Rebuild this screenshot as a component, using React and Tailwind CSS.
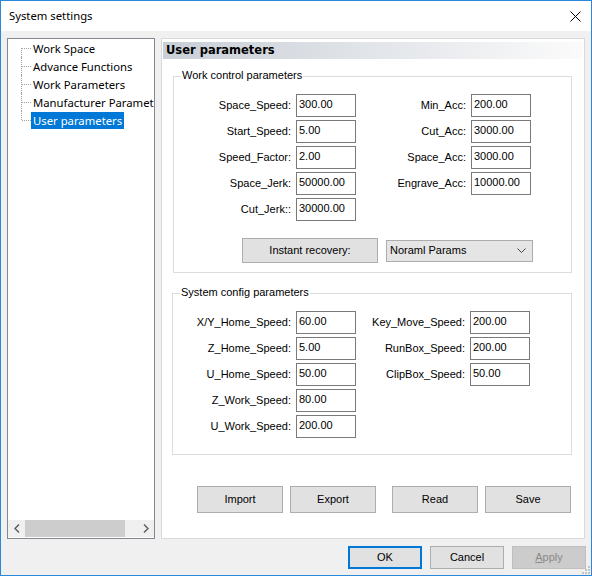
import React from "react";

// left / right columns of each group box
const WORK_LEFT = [
  ["Space_Speed:", "300.00"],
  ["Start_Speed:", "5.00"],
  ["Speed_Factor:", "2.00"],
  ["Space_Jerk:", "50000.00"],
  ["Cut_Jerk::", "30000.00"],
];
const WORK_RIGHT = [
  ["Min_Acc:", "200.00"],
  ["Cut_Acc:", "3000.00"],
  ["Space_Acc:", "3000.00"],
  ["Engrave_Acc:", "10000.00"],
];
const SYS_LEFT = [
  ["X/Y_Home_Speed:", "60.00"],
  ["Z_Home_Speed:", "5.00"],
  ["U_Home_Speed:", "50.00"],
  ["Z_Work_Speed:", "80.00"],
  ["U_Work_Speed:", "200.00"],
];
const SYS_RIGHT = [
  ["Key_Move_Speed:", "200.00"],
  ["RunBox_Speed:", "200.00"],
  ["ClipBox_Speed:", "50.00"],
];

// tree is scrolled/clipped in the original, so only the visible part
const TREE = [
  "Work Space",
  "Advance Functions",
  "Work Parameters",
  "Manufacturer Paramet",
  "User parameters",
];

const uiFont = "font-['Noto_Sans',sans-serif] text-[11.3px]";
const btn = "bg-[#e1e1e1] border border-[#adadad] flex items-center justify-center";

function Field({ label, value, labelW }) {
  return (
    <div className="flex items-center h-[23px]">
      <span className={`${labelW} text-right pr-[5px] whitespace-nowrap`}>{label}</span>
      <input
        defaultValue={value}
        className="w-[60px] h-[23px] border border-[#7a7a7a] bg-white px-[2px] pb-[3px] text-[11px] outline-none font-['Liberation_Sans',sans-serif]"
      />
    </div>
  );
}

function Column({ rows, labelW }) {
  return (
    <div className="flex flex-col gap-[3px]">
      {rows.map(([l, v]) => (
        <Field key={l} label={l} value={v} labelW={labelW} />
      ))}
    </div>
  );
}

function GroupBox({ title, className, children }) {
  return (
    <div className={`relative border border-[#dcdcdc] ${className}`}>
      <span className="absolute -top-[9px] left-[7px] bg-white px-[1px] leading-[14px]">
        {title}
      </span>
      {children}
    </div>
  );
}

function TreeRow({ text, index, last, selected }) {
  return (
    <div className="flex h-[18px] items-center">
      <div className="relative w-[23px] h-full shrink-0">
        {/* vertical connector */}
        <div
          className={`absolute left-[13px] w-0 border-l border-dotted border-[#a0a0a0] ${
            index === 0 ? "top-[9px] bottom-0" : last ? "top-0 h-[9px]" : "top-0 bottom-0"
          }`}
        />
        {/* horizontal connector */}
        <div className="absolute left-[14px] top-[9px] w-[9px] h-0 border-t border-dotted border-[#a0a0a0]" />
      </div>
      <span
        className={`px-[2px] h-[17px] leading-[17px] whitespace-nowrap ${
          selected ? "bg-[#0078d7] text-white" : "text-black"
        }`}
      >
        {text}
      </span>
    </div>
  );
}

export default function App() {
  return (
    <div className="relative w-[592px] h-[576px] flex flex-col border border-[#2b88d8] bg-[#f0f0f0] overflow-hidden text-black font-['Liberation_Sans',sans-serif] text-[11px]">
      {/* title bar */}
      <div className="h-[30px] shrink-0 bg-white flex items-center justify-between pl-[8px] pr-[10px]">
        <span className={uiFont}>System settings</span>
        <svg width="11" height="11" viewBox="0 0 11 11" className="mt-[1px]">
          <path d="M0.5 0.5 L10.5 10.5 M10.5 0.5 L0.5 10.5" stroke="#000" strokeWidth="1" />
        </svg>
      </div>

      {/* body */}
      <div className="flex gap-[6px] pl-[6px] pr-[6px] pt-[7px]">
        {/* tree */}
        <div className={`w-[148px] h-[501px] border border-[#828790] bg-white flex flex-col ${uiFont}`}>
          <div className="flex-1 overflow-hidden">
            {TREE.map((t, i) => (
              <TreeRow
                key={t}
                text={t}
                index={i}
                last={i === TREE.length - 1}
                selected={i === TREE.length - 1}
              />
            ))}
          </div>
          <div className="h-[17px] mb-[1px] flex bg-[#f0f0f0]">
            <div className="w-[17px] flex items-center justify-center">
              <svg width="6" height="9" viewBox="0 0 6 9">
                <path d="M5 0.5 L1 4.5 L5 8.5" fill="none" stroke="#606060" strokeWidth="1.5" />
              </svg>
            </div>
            <div className="flex-1 flex">
              <div className="w-[100px] bg-[#cdcdcd]" />
            </div>
            <div className="w-[17px] flex items-center justify-center">
              <svg width="6" height="9" viewBox="0 0 6 9">
                <path d="M1 0.5 L5 4.5 L1 8.5" fill="none" stroke="#606060" strokeWidth="1.5" />
              </svg>
            </div>
          </div>
        </div>

        {/* right page */}
        <div className="w-[424px] h-[501px] border border-[#d9d9d9] bg-white flex flex-col">
          <div className="mt-[3px] mx-[1px] h-[17px] pl-[3px] flex items-center bg-gradient-to-r from-[#c9cfd7] to-[#fbfbfb] font-['DejaVu_Sans',sans-serif] font-bold text-[11.5px]">
            User parameters
          </div>

          <GroupBox title="Work control parameters" className="mt-[17px] ml-[11px] w-[399px] pt-[17px] pb-[9px]">
            <div className="flex">
              <Column rows={WORK_LEFT} labelW="w-[122px]" />
              <Column rows={WORK_RIGHT} labelW="w-[115px]" />
            </div>
            <div className="flex items-center mt-[17px] ml-[68px]">
              <div className={`${btn} w-[136px] h-[25px]`}>Instant recovery:</div>
              <div className="ml-[8px] w-[147px] h-[22px] bg-[#e5e5e5] border border-[#acacac] flex items-center justify-between pl-[3px] pr-[6px]">
                <span>Noraml Params</span>
                <svg width="9" height="5" viewBox="0 0 9 5">
                  <path d="M0.5 0.5 L4.5 4.5 L8.5 0.5" fill="none" stroke="#444" strokeWidth="1" />
                </svg>
              </div>
            </div>
          </GroupBox>

          <GroupBox title="System config parameters" className="mt-[20px] ml-[10px] w-[400px] pt-[17px] pb-[16px]">
            <div className="flex">
              <Column rows={SYS_LEFT} labelW="w-[123px]" />
              <Column rows={SYS_RIGHT} labelW="w-[114px]" />
            </div>
          </GroupBox>

          <div className="flex mt-[31px] ml-[35px]">
            <div className={`${btn} w-[86px] h-[27px]`}>Import</div>
            <div className={`${btn} w-[86px] h-[27px] ml-[7px]`}>Export</div>
            <div className={`${btn} w-[86px] h-[27px] ml-[16px]`}>Read</div>
            <div className={`${btn} w-[86px] h-[27px] ml-[7px]`}>Save</div>
          </div>
        </div>
      </div>

      {/* dialog buttons */}
      <div className="flex justify-end gap-[8px] pr-[5px] mt-[7px]">
        <div className="w-[74px] h-[23px] bg-[#e1e1e1] border-2 border-[#0078d7] flex items-center justify-center">OK</div>
        <div className={`${btn} w-[74px] h-[23px]`}>Cancel</div>
        <div className="w-[74px] h-[23px] bg-[#cccccc] border border-[#bfbfbf] text-[#8a8a8a] flex items-center justify-center">
          <span><span className="underline">A</span>pply</span>
        </div>
      </div>

      {/* size grip */}
      <svg width="8" height="8" viewBox="0 0 8 8" className="absolute right-[1px] bottom-[1px]">
        <rect x="6" y="0" width="2" height="2" fill="#c4c4c4" />
        <rect x="3" y="3" width="2" height="2" fill="#c4c4c4" />
        <rect x="6" y="3" width="2" height="2" fill="#c4c4c4" />
        <rect x="0" y="6" width="2" height="2" fill="#c4c4c4" />
        <rect x="3" y="6" width="2" height="2" fill="#c4c4c4" />
        <rect x="6" y="6" width="2" height="2" fill="#c4c4c4" />
      </svg>
    </div>
  );
}
